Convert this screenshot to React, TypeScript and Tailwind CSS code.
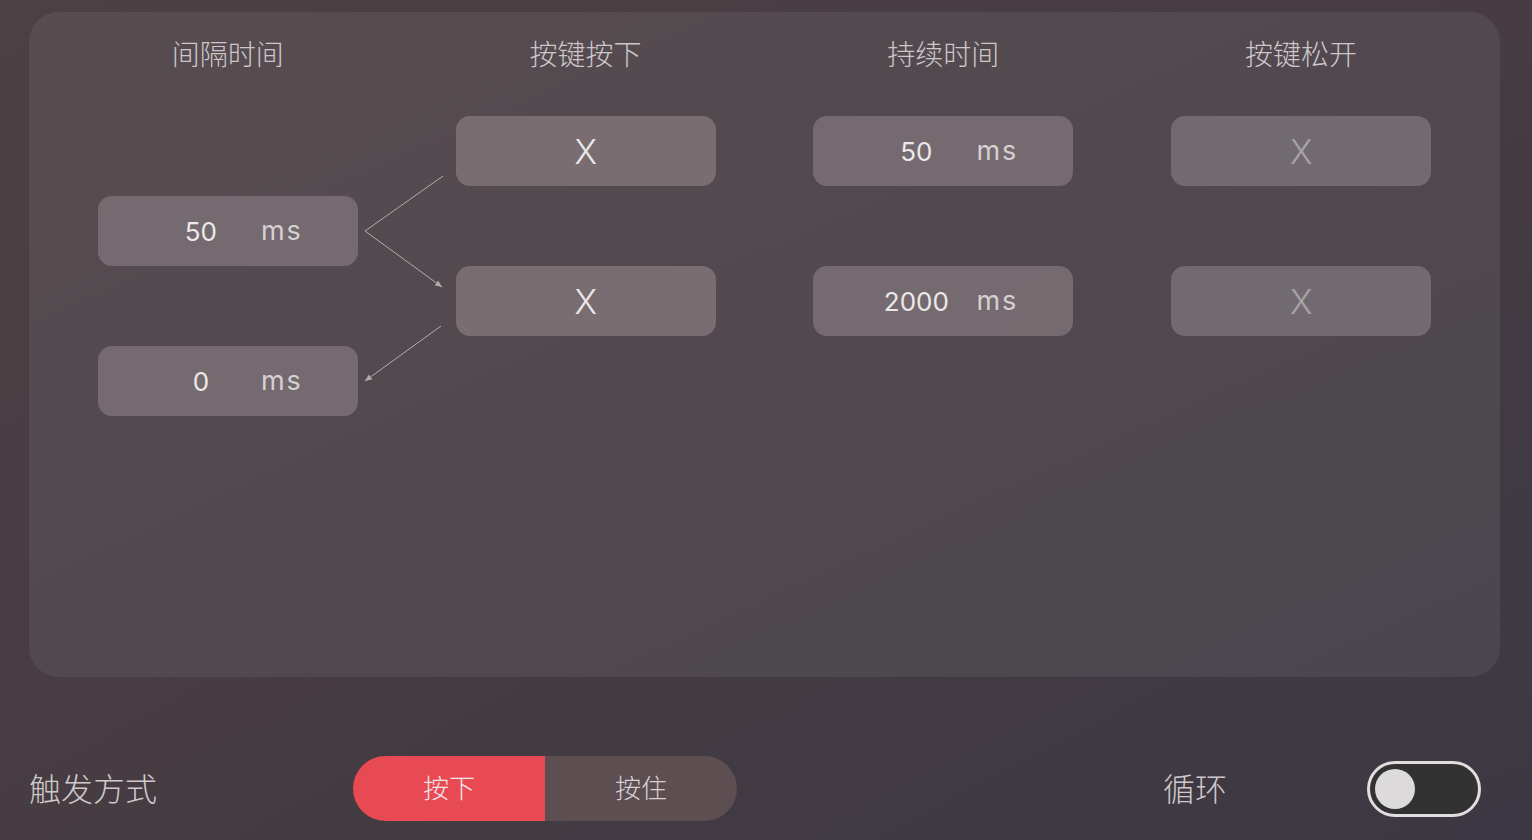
import React from 'react';

const cjk = { fontFamily: '"Noto Sans CJK SC", "Noto Sans", sans-serif' };
const num = { fontFamily: 'Inter, "Open Sans", sans-serif' };

function MsBox({ value }: { value: string }) {
  return (
    <div className="flex h-[70px] w-[260px] items-center rounded-[14px] bg-[#796e72]/90 pl-[43px]" style={num}>
      <span className="w-[120px] text-center text-[26px] text-[#ece8ea]">{value}</span>
      <span className="text-[27px] tracking-[2px] text-[#d6d0d3]">ms</span>
    </div>
  );
}

function KeyBox({ dim }: { dim?: boolean }) {
  return (
    <div
      className={
        'flex h-[70px] w-[260px] items-center justify-center rounded-[14px] ' +
        (dim ? 'bg-[#716b71]' : 'bg-[#7a6d72]')
      }
      style={num}
    >
      <span className={dim ? 'text-[34px] font-light text-[#a8a3a7]' : 'text-[34px] font-light text-[#ece8ea]'}>X</span>
    </div>
  );
}

function Header({ children }: { children: React.ReactNode }) {
  return (
    <div className="text-center text-[28px] font-light leading-[36px] text-[#cdc7ca]" style={cjk}>
      {children}
    </div>
  );
}

export default function App() {
  return (
    <div className="h-[840px] w-full overflow-hidden bg-gradient-to-br from-[#4c4044] via-[#463c42] to-[#3c3843] pt-[12px]">
      {/* steps panel */}
      <div className="relative ml-[29px] h-[665px] w-[1471px] rounded-[30px] bg-gradient-to-br from-[#574c50] to-[#4b464e] px-[20px] pt-[23px]">
        <div className="grid grid-cols-4">
          <div className="flex flex-col items-center">
            <Header>间隔时间</Header>
            <div className="mt-[125px] flex flex-col gap-[80px]">
              <MsBox value="50" />
              <MsBox value="0" />
            </div>
          </div>
          <div className="flex flex-col items-center">
            <Header>按键按下</Header>
            <div className="mt-[45px] flex flex-col gap-[80px]">
              <KeyBox />
              <KeyBox />
            </div>
          </div>
          <div className="flex flex-col items-center">
            <Header>持续时间</Header>
            <div className="mt-[45px] flex flex-col gap-[80px]">
              <MsBox value="50" />
              <MsBox value="2000" />
            </div>
          </div>
          <div className="flex flex-col items-center">
            <Header>按键松开</Header>
            <div className="mt-[45px] flex flex-col gap-[80px]">
              <KeyBox dim />
              <KeyBox dim />
            </div>
          </div>
        </div>

        {/* connectors */}
        <svg className="pointer-events-none absolute left-0 top-0" width="1471" height="665" viewBox="0 0 1471 665">
          <defs>
            <marker id="ah" markerWidth="8" markerHeight="8" refX="7" refY="4" orient="auto" markerUnits="userSpaceOnUse">
              <path d="M0,1 L7,4 L0,7 Z" fill="#b4acaf" />
            </marker>
          </defs>
          <path d="M414,164 L336,219 L413,275" fill="none" stroke="#b4acaf" strokeWidth="1" markerEnd="url(#ah)" />
          <line x1="412" y1="314" x2="336" y2="369" stroke="#b4acaf" strokeWidth="1" markerEnd="url(#ah)" />
        </svg>
      </div>

      {/* bottom controls */}
      <div className="mt-[79px] flex h-[65px] items-center px-[29px]">
        <div className="mb-[4px] w-[324px] text-[32px] font-light text-[#cfc9cc]" style={cjk}>
          触发方式
        </div>
        <div className="flex h-[65px] w-[384px] overflow-hidden rounded-full" style={cjk}>
          <div className="flex w-1/2 items-center justify-center bg-[#e84a54] pb-[4px] text-[26px] font-light text-[#f3e6e8]">按下</div>
          <div className="flex w-1/2 items-center justify-center bg-[#5d4e52] pb-[4px] text-[26px] font-light text-[#d8d0d3]">按住</div>
        </div>
        <div className="mb-[4px] ml-[426px] text-[32px] font-light text-[#cfc9cc]" style={cjk}>
          循环
        </div>
        <div className="ml-[140px] flex h-[56px] w-[114px] items-center rounded-full border-[3px] border-[#e2dedf] bg-[#333233] pl-[5px]">
          <div className="h-[40px] w-[40px] rounded-full bg-[#dcdadb]" />
        </div>
      </div>
    </div>
  );
}
